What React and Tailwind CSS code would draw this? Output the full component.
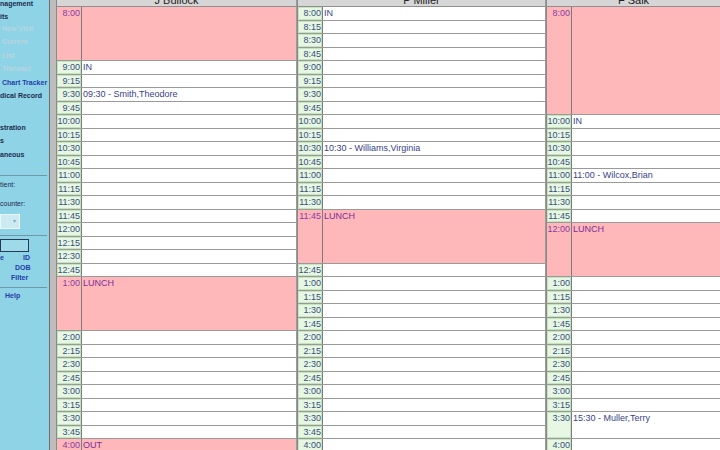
const ROW = 13.5;

const times = [
  "8:00", "8:15", "8:30", "8:45", "9:00", "9:15", "9:30", "9:45",
  "10:00", "10:15", "10:30", "10:45", "11:00", "11:15", "11:30", "11:45",
  "12:00", "12:15", "12:30", "12:45", "1:00", "1:15", "1:30", "1:45",
  "2:00", "2:15", "2:30", "2:45", "3:00", "3:15", "3:30", "3:45", "4:00",
];

// blocks: start index -> { span, text, pink }
function buildSlots(blocks) {
  const slots = [];
  let i = 0;
  while (i < times.length) {
    const b = blocks[times[i]];
    if (b) {
      slots.push({ time: times[i], span: b.span || 1, text: b.text, pink: b.pink });
      i += b.span || 1;
    } else {
      slots.push({ time: times[i], span: 1 });
      i += 1;
    }
  }
  return slots;
}

const columns = [
  {
    name: "J Bullock",
    width: "w-[240px]",
    slots: buildSlots({
      "8:00": { span: 4, pink: true },
      "9:00": { text: "IN" },
      "9:30": { text: "09:30 - Smith,Theodore" },
      "1:00": { span: 4, pink: true, text: "LUNCH" },
      "4:00": { pink: true, text: "OUT" },
    }),
  },
  {
    name: "P Miller",
    width: "w-[248px]",
    slots: buildSlots({
      "8:00": { text: "IN" },
      "10:30": { text: "10:30 - Williams,Virginia" },
      "11:45": { span: 4, pink: true, text: "LUNCH" },
    }),
  },
  {
    name: "F Salk",
    width: "flex-1",
    slots: buildSlots({
      "8:00": { span: 8, pink: true },
      "10:00": { text: "IN" },
      "11:00": { text: "11:00 - Wilcox,Brian" },
      "12:00": { span: 4, pink: true, text: "LUNCH" },
      "3:30": { span: 2, text: "15:30 - Muller,Terry" },
    }),
  },
];

function Slot({ slot }) {
  const pink = slot.pink;
  return (
    <div
      className={`flex shrink-0 border-b border-[#9a9a9a] ${pink ? "bg-[#ffb8b9]" : "bg-white"}`}
      style={{ height: slot.span * ROW }}
    >
      <div
        className={`w-[25px] shrink-0 border-r border-[#7c7c7c] text-right pr-[1px] text-[9px] leading-[12px] ${
          pink
            ? "text-[#8a3aa6]"
            : "bg-[#e8f6e4] text-[#34507c] shadow-[inset_0_0_0_1px_#c3e4bd]"
        }`}
      >
        {slot.time}
      </div>
      <div
        className={`flex-1 pl-[1px] text-[9px] leading-[12px] whitespace-nowrap overflow-hidden ${
          pink ? "text-[#7a2d9c]" : "text-[#3a3f8c]"
        }`}
      >
        {slot.text}
      </div>
    </div>
  );
}

function Column({ col }) {
  return (
    <div className={`${col.width} shrink-0 flex flex-col border-l border-[#8a8a8a] overflow-hidden`}>
      <div className="h-[7px] shrink-0 bg-[#d6d6d6] border-b border-[#8f8f8f] overflow-hidden">
        <div className="text-center text-[11px] leading-[12px] mt-[-6px] text-[#222]">{col.name}</div>
      </div>
      {col.slots.map((s) => (
        <Slot key={s.time} slot={s} />
      ))}
    </div>
  );
}

function Side({ children, className = "", h = "h-[13.5px]" }) {
  return (
    <div className={`${h} whitespace-nowrap text-[7px] leading-[8px] flex items-center ${className}`}>
      {children}
    </div>
  );
}

function Sidebar() {
  const nav = "font-bold text-[#1c2c4e]";
  const off = "font-bold text-[#b9d5de]";
  const link = "font-bold text-[#2440a8]";
  return (
    <div className="w-[49px] shrink-0 bg-[#8fd3e7] overflow-hidden flex flex-col mt-0">
      <div className="mt-[-3px]" />
      <Side className={nav}>nagement</Side>
      <Side className={nav} h="h-[12px]">its</Side>
      <Side className={`${off} pl-[2px]`} h="h-[13px]">New Visit</Side>
      <Side className={`${off} pl-[2px]`}>Current</Side>
      <Side className={`${off} pl-[2px]`}>List</Side>
      <Side className={`${off} pl-[2px]`}>Transact</Side>
      <Side className={`${link} pl-[2px]`}>Chart Tracker</Side>
      <Side className={nav}>dical Record</Side>
      <div className="h-[18px]" />
      <Side className={nav}>stration</Side>
      <Side className={nav}>s</Side>
      <Side className={nav}>aneous</Side>
      <div className="h-[13px]" />
      <div className="h-px bg-[#6f97a6] mr-[2px]" />
      <div className="h-[3px]" />
      <Side className="text-[#1c2c4e]">tient:</Side>
      <div className="h-[5px]" />
      <Side className="text-[#1c2c4e]">counter:</Side>
      <div className="h-[3px]" />
      <div className="h-[15px] w-[20px] bg-[#cde9f2] border border-[#eaf6fa] flex items-center justify-end pr-[3px]">
        <span className="text-[6px] text-[#7fa9b8] leading-none">▾</span>
      </div>
      <div className="h-[6px]" />
      <div className="h-px bg-[#6f97a6] mr-[2px]" />
      <div className="h-[3px]" />
      <div className="h-[13px] w-[29px] border border-[#2a3a55] bg-[#9fdaeb]" />
      <div className="h-[1px]" />
      <div className="h-[10px] flex justify-between w-[30px] text-[7px] leading-[10px] font-bold text-[#2440a8]">
        <span>e</span>
        <span>ID</span>
      </div>
      <div className="h-[10px] pl-[15px] text-[7px] leading-[10px] font-bold text-[#2440a8]">DOB</div>
      <div className="h-[10px] pl-[11px] text-[7px] leading-[10px] font-bold text-[#2440a8]">Filter</div>
      <div className="h-[4px]" />
      <div className="h-px bg-[#6f97a6] mr-[2px]" />
      <div className="h-[3px]" />
      <div className="h-[10px] pl-[5px] text-[7px] leading-[10px] font-bold text-[#2440a8]">Help</div>
    </div>
  );
}

export default function App() {
  return (
    <div
      className="w-[720px] h-[450px] overflow-hidden flex bg-[#c8c8c8]"
      style={{ fontFamily: '"Liberation Sans", Arial, sans-serif' }}
    >
      <Sidebar />
      <div className="w-[7px] shrink-0 bg-[#bdbdbd] border-l border-[#6e6e6e]" />
      <div className="flex-1 flex gap-px bg-[#9a9a9a] overflow-hidden">
        {columns.map((c) => (
          <Column key={c.name} col={c} />
        ))}
      </div>
    </div>
  );
}
